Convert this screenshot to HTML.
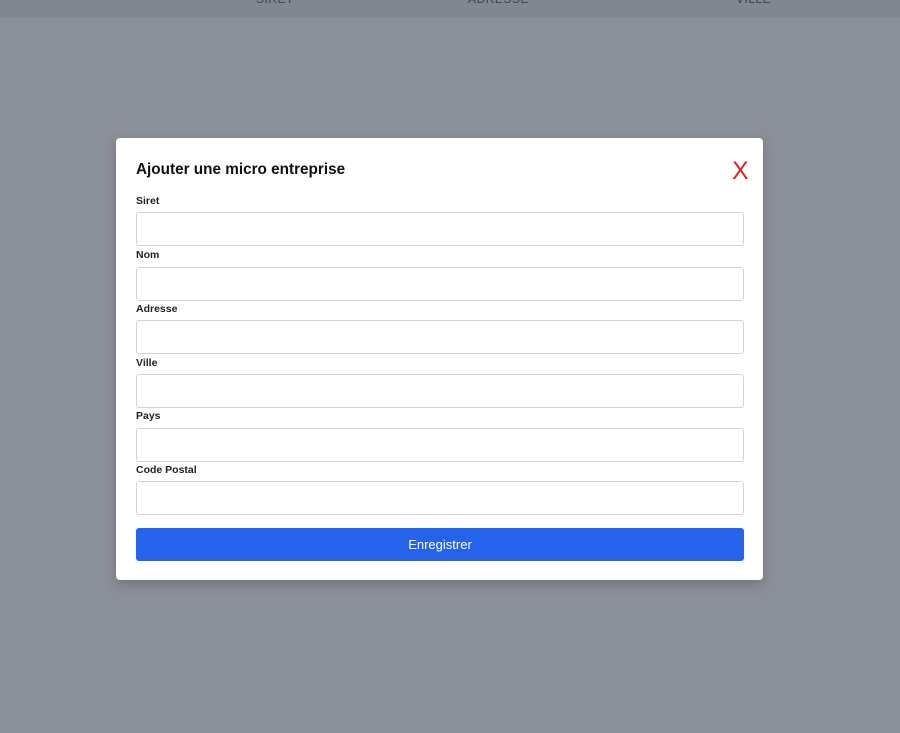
<!DOCTYPE html>
<html><head><style>
body{margin:0;width:900px;height:733px;background:#8b8f97;font-family:"Liberation Sans",sans-serif;position:relative;overflow:hidden}
.top{position:absolute;left:0;top:0;width:900px;height:18px;background:#82868f}
.th{position:absolute;top:-8px;font-size:12px;color:#3f434a;letter-spacing:.5px}
.modal{position:absolute;left:116px;top:138px;width:647px;height:442px;background:#fff;border-radius:4px;box-shadow:0 4px 12px rgba(0,0,0,.2)}
h2{position:absolute;left:20px;top:23px;margin:0;font-size:15.3px;font-weight:600;color:#111}
.x{position:absolute;left:616px;top:21px;color:#e02424;font-size:25px;line-height:25px}
.l{position:absolute;left:20px;font-size:10.5px;font-weight:600;color:#222}
.i{position:absolute;left:20px;width:606px;height:32px;border:1px solid #d1d5db;border-radius:3px}
.b{position:absolute;left:20px;top:390px;width:608px;height:33px;background:#2563eb;border-radius:3px;color:#fff;font-size:13px;text-align:center;line-height:33px}
</style></head><body>
<div class="top"><span class="th" style="left:256px">SIRET</span><span class="th" style="left:468px">ADRESSE</span><span class="th" style="left:736px">VILLE</span></div>
<div class="modal">
<h2>Ajouter une micro entreprise</h2><div class="x">X</div>
<div class="l" style="top:57px">Siret</div><div class="i" style="top:74px"></div>
<div class="l" style="top:111px">Nom</div><div class="i" style="top:129px"></div>
<div class="l" style="top:165px">Adresse</div><div class="i" style="top:182px"></div>
<div class="l" style="top:219px">Ville</div><div class="i" style="top:236px"></div>
<div class="l" style="top:272px">Pays</div><div class="i" style="top:290px"></div>
<div class="l" style="top:326px">Code Postal</div><div class="i" style="top:343px"></div>
<div class="b">Enregistrer</div>
</div>
</body></html>
